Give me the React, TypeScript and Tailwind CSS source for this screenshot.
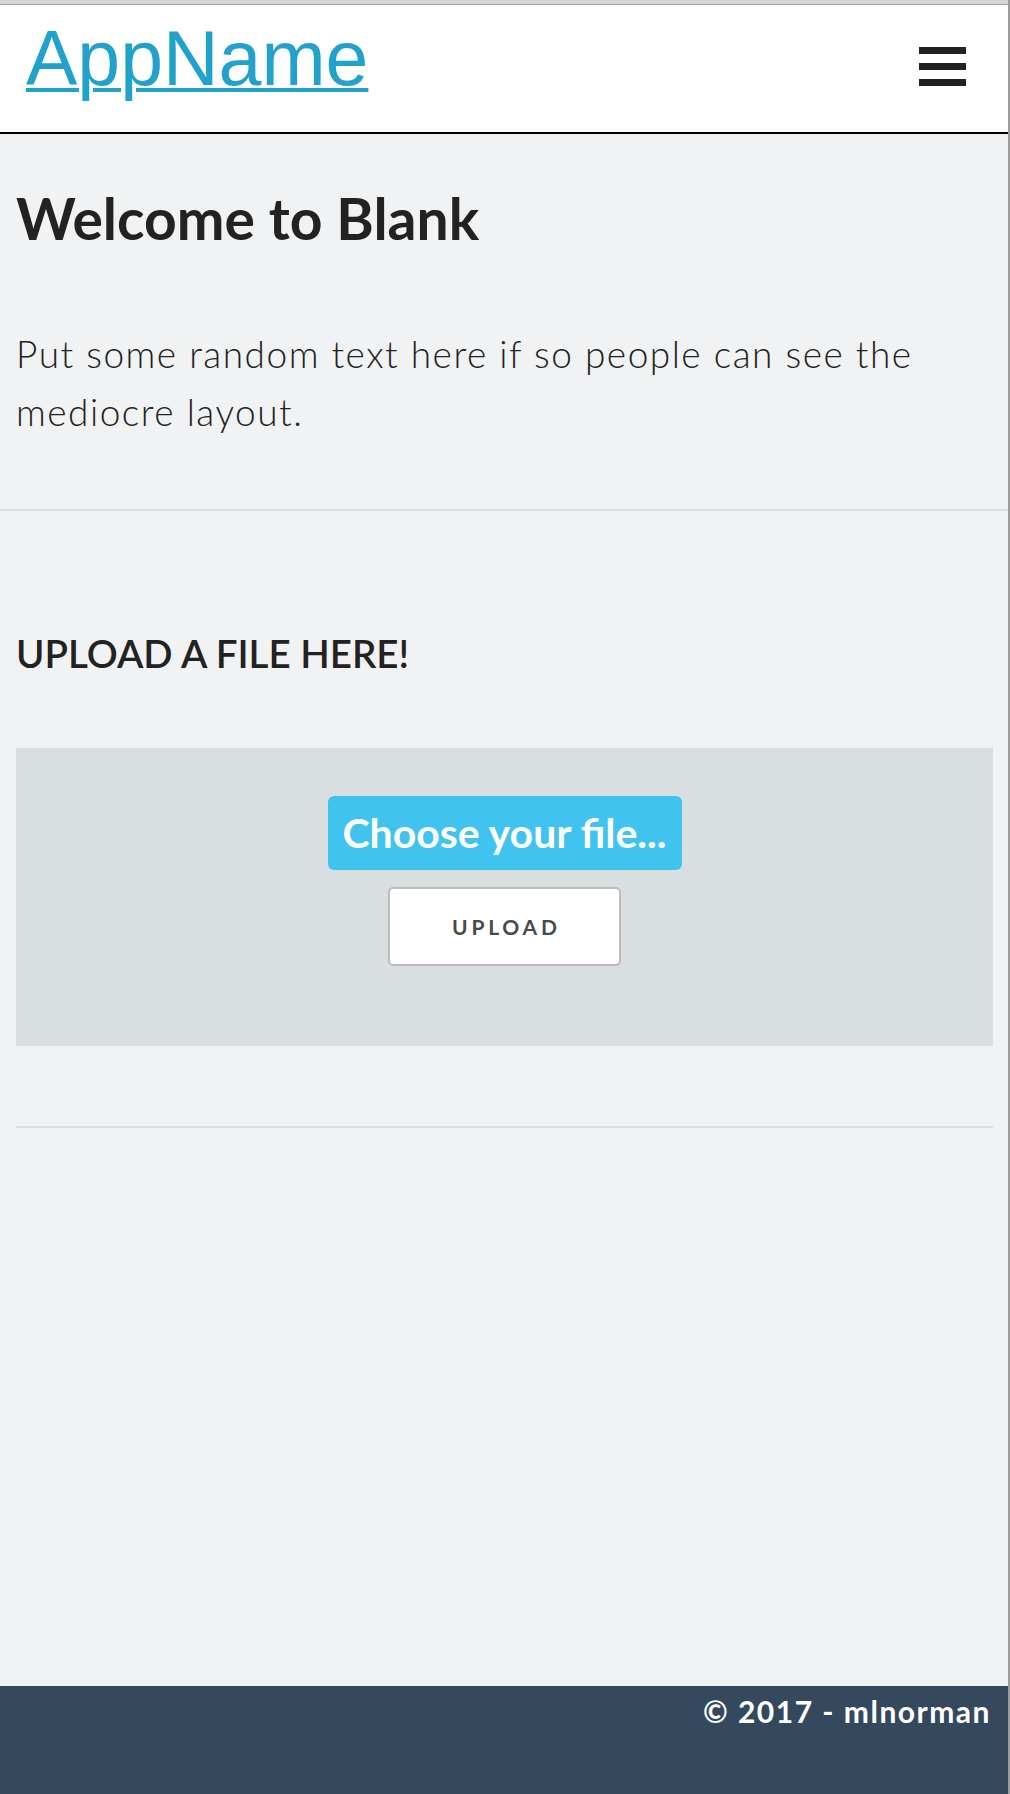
import React from "react";

export default function App() {
  return (
    <div className="w-[1010px] min-h-[1794px] flex flex-col bg-[#f1f2f4] border-r-2 border-[#9c9c9c] font-['Lato',sans-serif]">
      <div className="h-[5px] bg-[#d6d5d7] border-b border-[#a3a3a3]" />
      <header className="h-[129px] bg-white border-b-2 border-black flex items-start justify-between pl-[26px] pr-[42px]">
        <a href="#" className="mt-[9px] text-[77px] leading-[88px] text-[#21a2cc] underline decoration-[4px] underline-offset-[3px] font-['Liberation_Sans',Arial,sans-serif]">
          AppName
        </a>
        <button className="mt-[42px] flex flex-col gap-[9px] w-[47px]" aria-label="menu">
          <span className="block h-[7px] w-full bg-[#222]" />
          <span className="block h-[7px] w-full bg-[#222]" />
          <span className="block h-[7px] w-full bg-[#222]" />
        </button>
      </header>
      <section className="px-[16px] pt-[52px] pb-[68px] text-[#222]">
        <h1 className="text-[57px] leading-[64px] font-bold">Welcome to Blank</h1>
        <p className="mt-[75px] text-[37px] leading-[58px] font-light tracking-[1.5px]">
          Put some random text here if so people can see the mediocre layout.
        </p>
      </section>
      <div className="h-[2px] bg-[#dcdde0]" />
      <section className="pl-[16px] pr-[15px] pt-[120px] text-[#222]">
        <h2 className="text-[38.5px] leading-[44px] font-semibold">UPLOAD A FILE HERE!</h2>
        <div className="mt-[73px] h-[298px] bg-[#d9dee0] flex flex-col items-center pt-[48px]">
          <label className="w-[354px] h-[74px] rounded-[6px] bg-[#40c4ef] text-white text-[41px] font-bold flex items-center justify-center cursor-pointer">
            Choose your file...
          </label>
          <button className="mt-[17px] w-[233px] h-[79px] bg-white border-2 border-[#bcbcbc] rounded-[5px] text-[#4a4a4a] text-[21px] font-bold tracking-[0.18em] pl-[0.18em]">
            UPLOAD
          </button>
        </div>
        <div className="mt-[80px] h-[2px] bg-[#dcdde0]" />
      </section>
      <footer className="mt-auto h-[108px] bg-[#34495e] flex justify-end pr-[17px] pt-[7px]">
        <span className="text-white text-[30px] leading-[36px] font-bold tracking-[1.5px]">© 2017 - mlnorman</span>
      </footer>
    </div>
  );
}
